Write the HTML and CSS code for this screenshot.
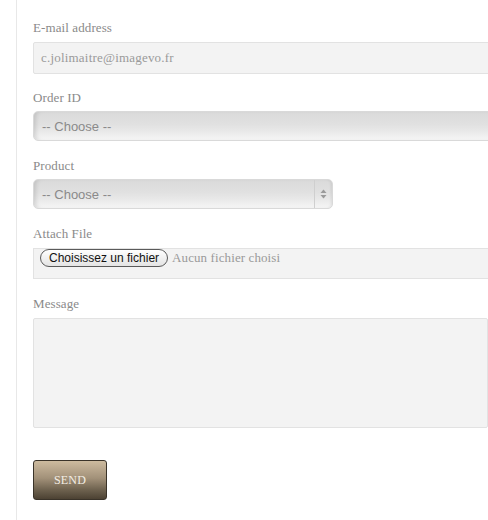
FILE: index.html
```html
<!DOCTYPE html>
<html lang="en">
<head>
<meta charset="utf-8">
<title>Contact form</title>
<link rel="stylesheet" href="styles.css">
</head>
<body>
<div class="page">
  <form class="form">
    <div class="group group-first">
      <label class="label" for="email">E-mail address</label>
      <input class="text-input wide" id="email" type="text" value="c.jolimaitre@imagevo.fr">
    </div>
    <div class="group">
      <label class="label" for="order">Order ID</label>
      <div class="select wide">
        <select id="order"><option>-- Choose --</option></select>
      </div>
    </div>
    <div class="group">
      <label class="label" for="product">Product</label>
      <div class="select narrow">
        <select id="product"><option>-- Choose --</option></select>
        <span class="select-arrows">
          <svg width="7" height="10" viewBox="0 0 7 10"><path d="M3.5 0.5 L6.5 4 L0.5 4 Z" fill="#9a9a9a"/><path d="M3.5 9.5 L6.5 6 L0.5 6 Z" fill="#9a9a9a"/></svg>
        </span>
      </div>
    </div>
    <div class="group">
      <span class="label">Attach File</span>
      <div class="file-box wide">
        <span class="file-btn">Choisissez un fichier</span>
        <span class="file-name">Aucun fichier choisi</span>
      </div>
    </div>
    <div class="group">
      <label class="label" for="message">Message</label>
      <textarea class="textarea" id="message"></textarea>
    </div>
    <button class="send" type="button">SEND</button>
  </form>
</div>
</body>
</html>
```

FILE: styles.css
```css
html, body {
  margin: 0;
  padding: 0;
  background: #fff;
  overflow: hidden;
}

.page {
  margin-left: 16px;
  border-left: 1px solid #e8e8e8;
  padding: 20px 0 0 16px;
  min-height: 520px;
  box-sizing: border-box;
  overflow: hidden;
}

.form {
  display: flex;
  flex-direction: column;
  align-items: flex-start;
}

.group {
  display: flex;
  flex-direction: column;
  align-items: flex-start;
  margin-bottom: 17px;
}

.group-first {
  margin-bottom: 16px;
}

.label {
  display: block;
  font: 13px/16px "Liberation Serif", serif;
  letter-spacing: 0.1px;
  color: #8a8a8a;
  margin-bottom: 5px;
}

.wide {
  width: 480px;
}

.text-input {
  box-sizing: border-box;
  height: 32px;
  margin: 1px 0 0 0;
  padding: 0 7px;
  border: 1px solid #e2e2e2;
  border-radius: 2px;
  background: #f3f3f3;
  font: 13px "Liberation Serif", serif;
  letter-spacing: 0.2px;
  color: #9a9a9a;
  outline: none;
}

.select {
  position: relative;
  box-sizing: border-box;
  height: 30px;
}

.select.narrow {
  width: 300px;
}

.select select {
  -webkit-appearance: none;
  appearance: none;
  box-sizing: border-box;
  width: 100%;
  height: 100%;
  margin: 0;
  padding: 0 8px;
  border: 1px solid #d9d9d9;
  border-radius: 5px;
  background: linear-gradient(#dadada 0%, #e1e1e1 45%, #e9e9e9 70%, #f6f6f6 100%);
  box-shadow: inset 4px 0 4px -2px rgba(0, 0, 0, 0.12), inset -3px 0 3px -2px rgba(0, 0, 0, 0.08);
  font: 13px "Liberation Sans", Arial, sans-serif;
  color: #8a8a8a;
  outline: none;
}

.select-arrows {
  position: absolute;
  top: 1px;
  right: 1px;
  bottom: 1px;
  width: 17px;
  border-left: 1px solid #cfcfcf;
  display: flex;
  align-items: center;
  justify-content: center;
}

.file-box {
  box-sizing: border-box;
  height: 31px;
  margin-top: 1px;
  padding: 0 0 0 6px;
  border: 1px solid #e2e2e2;
  background: #f3f3f3;
  display: flex;
  align-items: flex-start;
  gap: 4px;
}

.file-btn {
  box-sizing: border-box;
  height: 18px;
  padding: 0 8px;
  border: 1px solid #5a5a5a;
  border-radius: 9px;
  background: linear-gradient(#ffffff, #f1f1f1 50%, #e4e4e4);
  font: 12px/16px "Liberation Sans", Arial, sans-serif;
  color: #111;
  white-space: nowrap;
}

.file-name {
  font: 13px/17px "Liberation Serif", serif;
  letter-spacing: 0.1px;
  color: #9a9a9a;
  white-space: nowrap;
}

.textarea {
  box-sizing: border-box;
  width: 455px;
  height: 110px;
  margin: 1px 0 0 0;
  border: 1px solid #e2e2e2;
  border-radius: 2px;
  background: #f3f3f3;
  resize: none;
  outline: none;
}

.send {
  box-sizing: border-box;
  width: 74px;
  height: 40px;
  margin-top: 15px;
  padding: 0;
  border: 1px solid #3a3329;
  border-radius: 3px;
  background: linear-gradient(#cdbb9f 0%, #a29179 45%, #6f6350 75%, #4c4233 100%);
  font: 12px "Liberation Serif", serif;
  color: #f2ede4;
  letter-spacing: 0.2px;
  cursor: pointer;
}
```
